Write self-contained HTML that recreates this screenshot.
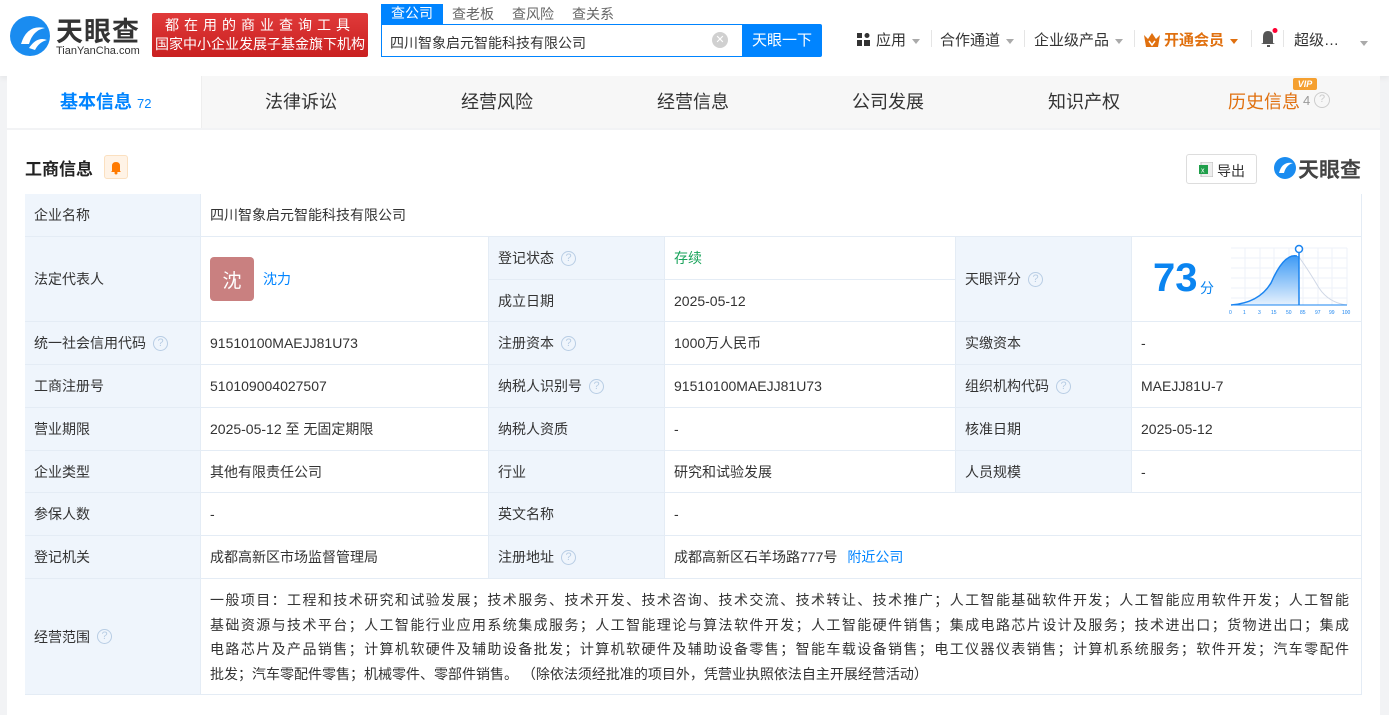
<!DOCTYPE html>
<html><head><meta charset="utf-8">
<style>
*{box-sizing:border-box;margin:0;padding:0}
body{width:1389px;height:715px;overflow:hidden;background:#f2f3f5;font-family:"Liberation Sans","Noto Sans CJK SC",sans-serif;color:#333;position:relative}
.abs{position:absolute}
.hdr{left:0;top:0;width:1389px;height:76px;background:#fff;box-shadow:0 2px 6px rgba(0,0,0,.06)}
.slogan{left:152px;top:13px;width:216px;height:44px;background:linear-gradient(#e03a3a,#c92020);border-radius:2px;color:#fff;font-size:14px;line-height:19px;text-align:center;padding-top:3px}
.stab{top:4px;font-size:14px;color:#666}
.search{left:381px;top:24px;width:362px;height:33px;border:1px solid #0084ff;border-right:none;font-size:14px;padding:8px 0 0 8px;color:#333}
.sbtn{left:742px;top:24px;width:80px;height:33px;background:#0084ff;color:#fff;font-size:15px;text-align:center;line-height:33px;border-radius:0 2px 2px 0}
.nav{top:29px;font-size:15px;color:#333}
.tri{display:inline-block;width:0;height:0;border-left:4px solid transparent;border-right:4px solid transparent;border-top:5px solid #aaa;vertical-align:middle;margin-left:6px}
.sep{top:30px;width:1px;height:17px;background:#e5e5e5}
.tabs{left:7px;top:76px;width:1373px;height:52px;background:#f7f7f7}
.tab{top:88px;font-size:18px;color:#333}
.card{left:7px;top:130px;width:1373px;height:585px;background:#fff}
.c{position:absolute;border-right:1px solid #e4ecf5;border-bottom:1px solid #e4ecf5;font-size:14px;padding-left:9px;display:flex;align-items:center;background:#fff}
.l{background:#eff5fc}
.q{display:inline-block;width:15px;height:15px;border:1px solid #b8cde4;border-radius:50%;color:#b8cde4;font-size:11px;line-height:13px;text-align:center;margin-left:7px}
.scope span{display:block;text-align:justify;text-align-last:justify;white-space:nowrap;width:1139px;height:24.5px;line-height:24.5px}
</style></head><body>
<div class="abs hdr"></div>
<svg class="abs" style="left:7px;top:14px" width="46" height="44" viewBox="0 0 46 44"><circle cx="23" cy="22" r="20" fill="#1a8cf0"/><path d="M14 30 Q20 10 38 14 Q26 16 22 30 Z" fill="#fff"/><path d="M22 34 Q30 22 40 26 Q32 28 28 36Z" fill="#fff"/></svg>
<div class="abs" style="left:56px;top:10px;font-size:27px;font-weight:bold;color:#333;letter-spacing:1px">天眼查</div>
<div class="abs" style="left:56px;top:45px;font-size:11px;color:#333">TianYanCha.com</div>
<div class="abs slogan"><div style="letter-spacing:5px">都在用的商业查询工具</div><div>国家中小企业发展子基金旗下机构</div></div>
<div class="abs" style="left:381px;top:4px;width:62px;height:20px;background:#0084ff;color:#fff;font-size:14px;text-align:center;line-height:19px">查公司</div>
<div class="abs stab" style="left:452px">查老板</div>
<div class="abs stab" style="left:512px">查风险</div>
<div class="abs stab" style="left:572px">查关系</div>
<div class="abs search">四川智象启元智能科技有限公司</div>
<div class="abs" style="left:712px;top:32px;width:16px;height:16px;border-radius:50%;background:#d0d0d0;color:#fff;font-size:11px;text-align:center;line-height:16px">✕</div>
<div class="abs sbtn">天眼一下</div>
<svg class="abs" style="left:857px;top:33px" width="13" height="13"><rect x="0" y="0" width="5" height="5" fill="#333"/><rect x="0" y="7" width="5" height="6" fill="#333"/><rect x="7" y="7" width="6" height="6" fill="#333"/><circle cx="10" cy="2.5" r="2.5" fill="#333"/></svg>
<div class="abs nav" style="left:876px">应用<span class="tri"></span></div>
<div class="abs sep" style="left:931px"></div>
<div class="abs nav" style="left:940px">合作通道<span class="tri"></span></div>
<div class="abs sep" style="left:1024px"></div>
<div class="abs nav" style="left:1034px">企业级产品<span class="tri"></span></div>
<div class="abs sep" style="left:1134px"></div>
<svg class="abs" style="left:1144px;top:33px" width="16" height="14"><path d="M0 2 L4 6 L8 0 L12 6 L16 2 L14 14 L2 14Z" fill="#e0700f"/><path d="M5 8 L8 12 L11 8" stroke="#fff" stroke-width="1.5" fill="none"/></svg>
<div class="abs nav" style="left:1164px;color:#e0700f;font-weight:bold">开通会员<span class="tri" style="border-top-color:#e0700f"></span></div>
<div class="abs sep" style="left:1251px"></div>
<svg class="abs" style="left:1259px;top:28px" width="20" height="20"><path d="M4 15 L4 9 Q4 3 9 3 Q14 3 14 9 L14 15 L16 16 L2 16Z" fill="#555"/><rect x="8" y="17" width="3" height="2" fill="#555"/><circle cx="16" cy="2.5" r="2.5" fill="#f03"/></svg>
<div class="abs sep" style="left:1283px"></div>
<div class="abs nav" style="left:1294px">超级…</div>
<div class="abs" style="left:1360px;top:35px"><span class="tri" style="margin:0"></span></div>

<div class="abs tabs"></div>
<div class="abs" style="left:7px;top:76px;width:195px;height:52px;background:#fff;border-right:1px solid #eee"></div>
<div class="abs tab" style="left:60px;color:#0084ff;font-weight:bold">基本信息 <span style="font-size:13px;font-weight:normal">72</span></div>
<div class="abs tab" style="left:265px">法律诉讼</div>
<div class="abs tab" style="left:461px">经营风险</div>
<div class="abs tab" style="left:657px">经营信息</div>
<div class="abs tab" style="left:852px">公司发展</div>
<div class="abs tab" style="left:1048px">知识产权</div>
<div class="abs tab" style="left:1228px;color:#e0700f">历史信息</div>
<div class="abs" style="left:1303px;top:93px;font-size:13px;color:#999">4</div>
<div class="abs q" style="left:1314px;top:92px;width:16px;height:16px;border-color:#ccc;color:#ccc;margin:0">?</div>
<div class="abs" style="left:1293px;top:78px;width:24px;height:12px;background:#f5a030;color:#fff;font-size:9px;font-weight:bold;font-style:italic;text-align:center;line-height:12px;border-radius:2px">VIP</div>

<div class="abs card"></div>
<div class="abs" style="left:25px;top:155px;font-size:17px;font-weight:bold;color:#222">工商信息</div>
<div class="abs" style="left:104px;top:155px;width:24px;height:24px;background:#fff3e6;border:1px solid #fbe0c0;border-radius:3px"><svg width="22" height="22"><path d="M7 15 L7 10 Q7 6 11 6 Q15 6 15 10 L15 15 L16 16 L6 16Z" fill="#ff7a00"/><circle cx="11" cy="17" r="1.5" fill="#ff7a00"/></svg></div>
<div class="abs" style="left:1186px;top:154px;width:71px;height:30px;border:1px solid #ddd;border-radius:3px;font-size:14px;padding:6px 0 0 30px">导出</div>
<svg class="abs" style="left:1199px;top:162px" width="14" height="15"><rect x="2" y="0" width="12" height="15" fill="#eee" stroke="#bbb"/><rect x="0" y="3" width="9" height="9" fill="#1f9e4a"/><text x="2" y="10.5" font-size="7" fill="#fff" font-family="Liberation Sans">x</text></svg>
<svg class="abs" style="left:1273px;top:156px" width="24" height="24"><circle cx="12" cy="12" r="11" fill="#1a8cf0"/><path d="M6 17 Q9 5 20 7 Q13 9 11 17Z" fill="#fff"/></svg>
<div class="abs" style="left:1298px;top:154px;font-size:21px;font-weight:bold;color:#444">天眼查</div>

<div class="abs" style="left:25px;top:194px;width:1337px;height:501px;border-top:1px solid #e4ecf5;border-left:1px solid #e4ecf5">
<div style="position:relative;left:-26px;top:-195px">
<div class="c l" style="left:25px;top:194px;width:176px;height:43px">企业名称</div>
<div class="c" style="left:201px;top:194px;width:1161px;height:43px">四川智象启元智能科技有限公司</div>

<div class="c l" style="left:25px;top:237px;width:176px;height:85px">法定代表人</div>
<div class="c" style="left:201px;top:237px;width:288px;height:85px"><span style="width:44px;height:44px;background:#c98080;border-radius:4px;color:#fff;font-size:19px;display:inline-flex;align-items:center;justify-content:center">沈</span><span style="color:#0084ff;margin-left:9px">沈力</span></div>
<div class="c l" style="left:489px;top:237px;width:176px;height:43px">登记状态<span class="q">?</span></div>
<div class="c" style="left:665px;top:237px;width:291px;height:43px;color:#1aa35b">存续</div>
<div class="c l" style="left:489px;top:280px;width:176px;height:42px">成立日期</div>
<div class="c" style="left:665px;top:280px;width:291px;height:42px">2025-05-12</div>
<div class="c l" style="left:956px;top:237px;width:176px;height:85px">天眼评分<span class="q">?</span></div>
<div class="c" style="left:1132px;top:237px;width:230px;height:85px"></div>

<div class="c l" style="left:25px;top:322px;width:176px;height:43px">统一社会信用代码<span class="q">?</span></div>
<div class="c" style="left:201px;top:322px;width:288px;height:43px">91510100MAEJJ81U73</div>
<div class="c l" style="left:489px;top:322px;width:176px;height:43px">注册资本<span class="q">?</span></div>
<div class="c" style="left:665px;top:322px;width:291px;height:43px">1000万人民币</div>
<div class="c l" style="left:956px;top:322px;width:176px;height:43px">实缴资本</div>
<div class="c" style="left:1132px;top:322px;width:230px;height:43px">-</div>

<div class="c l" style="left:25px;top:365px;width:176px;height:43px">工商注册号</div>
<div class="c" style="left:201px;top:365px;width:288px;height:43px">510109004027507</div>
<div class="c l" style="left:489px;top:365px;width:176px;height:43px">纳税人识别号<span class="q">?</span></div>
<div class="c" style="left:665px;top:365px;width:291px;height:43px">91510100MAEJJ81U73</div>
<div class="c l" style="left:956px;top:365px;width:176px;height:43px">组织机构代码<span class="q">?</span></div>
<div class="c" style="left:1132px;top:365px;width:230px;height:43px">MAEJJ81U-7</div>

<div class="c l" style="left:25px;top:408px;width:176px;height:43px">营业期限</div>
<div class="c" style="left:201px;top:408px;width:288px;height:43px">2025-05-12 至 无固定期限</div>
<div class="c l" style="left:489px;top:408px;width:176px;height:43px">纳税人资质</div>
<div class="c" style="left:665px;top:408px;width:291px;height:43px">-</div>
<div class="c l" style="left:956px;top:408px;width:176px;height:43px">核准日期</div>
<div class="c" style="left:1132px;top:408px;width:230px;height:43px">2025-05-12</div>

<div class="c l" style="left:25px;top:451px;width:176px;height:42px">企业类型</div>
<div class="c" style="left:201px;top:451px;width:288px;height:42px">其他有限责任公司</div>
<div class="c l" style="left:489px;top:451px;width:176px;height:42px">行业</div>
<div class="c" style="left:665px;top:451px;width:291px;height:42px">研究和试验发展</div>
<div class="c l" style="left:956px;top:451px;width:176px;height:42px">人员规模</div>
<div class="c" style="left:1132px;top:451px;width:230px;height:42px">-</div>

<div class="c l" style="left:25px;top:493px;width:176px;height:43px">参保人数</div>
<div class="c" style="left:201px;top:493px;width:288px;height:43px">-</div>
<div class="c l" style="left:489px;top:493px;width:176px;height:43px">英文名称</div>
<div class="c" style="left:665px;top:493px;width:697px;height:43px">-</div>

<div class="c l" style="left:25px;top:536px;width:176px;height:43px">登记机关</div>
<div class="c" style="left:201px;top:536px;width:288px;height:43px">成都高新区市场监督管理局</div>
<div class="c l" style="left:489px;top:536px;width:176px;height:43px">注册地址<span class="q">?</span></div>
<div class="c" style="left:665px;top:536px;width:697px;height:43px">成都高新区石羊场路777号<span style="color:#0084ff;margin-left:10px">附近公司</span></div>

<div class="c l" style="left:25px;top:579px;width:176px;height:116px">经营范围<span class="q">?</span></div>
<div class="c scope" style="left:201px;top:579px;width:1161px;height:116px;display:block;padding-top:9px">
<span>一般项目：工程和技术研究和试验发展；技术服务、技术开发、技术咨询、技术交流、技术转让、技术推广；人工智能基础软件开发；人工智能应用软件开发；人工智能</span>
<span>基础资源与技术平台；人工智能行业应用系统集成服务；人工智能理论与算法软件开发；人工智能硬件销售；集成电路芯片设计及服务；技术进出口；货物进出口；集成</span>
<span>电路芯片及产品销售；计算机软硬件及辅助设备批发；计算机软硬件及辅助设备零售；智能车载设备销售；电工仪器仪表销售；计算机系统服务；软件开发；汽车零配件</span>
<span style="text-align-last:left;text-align:left">批发；汽车零配件零售；机械零件、零部件销售。 （除依法须经批准的项目外，凭营业执照依法自主开展经营活动）</span>
</div>
</div></div>

<div class="abs" style="left:1153px;top:256px;font-size:40px;font-weight:bold;color:#0a84f0">73</div>
<div class="abs" style="left:1200px;top:278px;font-size:14px;color:#0a84f0">分</div>
<svg class="abs" style="left:1229px;top:243px" width="124" height="75" viewBox="0 0 124 75">
<g stroke="#eef2f8" stroke-width="1"><path d="M2 5H118M2 15H118M2 25H118M2 35H118M2 45H118M2 55H118M16 5V62M31 5V62M45 5V62M60 5V62M74 5V62M89 5V62M103 5V62M118 5V62"/></g>
<defs><linearGradient id="g" x1="0" y1="0" x2="0" y2="1"><stop offset="0" stop-color="#3d9af5"/><stop offset="1" stop-color="#e6f1fd"/></linearGradient></defs>
<path d="M2 62 Q30 60 42 40 Q55 10 68 13 L70 13 L70 62Z" fill="url(#g)"/>
<path d="M2 62 Q30 60 42 40 Q55 10 68 13" stroke="#1a84f0" stroke-width="1.5" fill="none"/>
<path d="M70 14 Q80 28 90 45 Q100 60 118 62" stroke="#cfd7e6" fill="none"/>
<path d="M70 8V62" stroke="#1a84f0" stroke-width="1.5"/><circle cx="70" cy="6" r="3.5" fill="#fff" stroke="#1a84f0" stroke-width="1.5"/>
<path d="M2 62H118" stroke="#1a84f0"/>
<g font-size="5" fill="#1a84f0" font-family="Liberation Sans"><text x="0" y="71">0</text><text x="14" y="71">1</text><text x="29" y="71">3</text><text x="42" y="71">15</text><text x="57" y="71">50</text><text x="71" y="71">85</text><text x="86" y="71">97</text><text x="100" y="71">99</text><text x="113" y="71">100</text></g>
</svg>
</body></html>
